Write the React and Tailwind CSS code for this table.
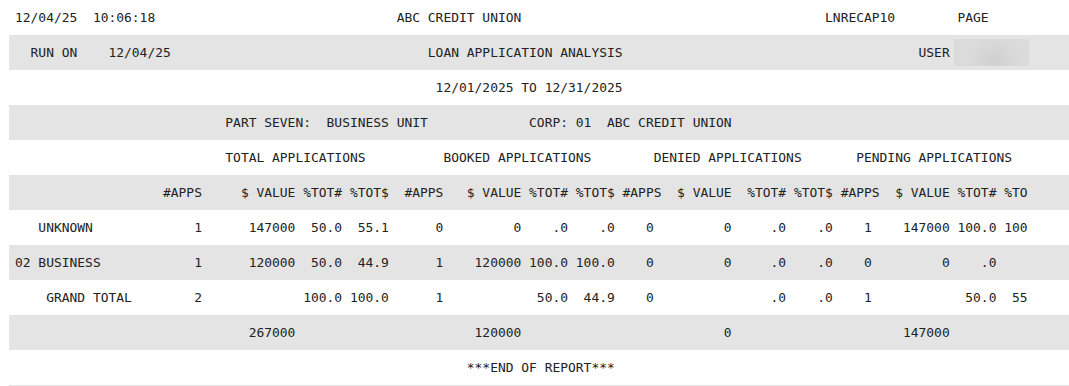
import React from 'react';

// report is a fixed 130-column printout, clipped at the right
const WIDTH = 130;

// place text at char columns; align 'r' means col is the last char
function buildLine(parts) {
  const chars = Array(WIDTH).fill(' ');
  parts.forEach(([col, text, align]) => {
    const start = align === 'r' ? col - text.length + 1 : col;
    for (let i = 0; i < text.length; i++) {
      const c = start + i;
      if (c >= 0 && c < WIDTH) chars[c] = text[i];
    }
  });
  return chars.join('').replace(/\s+$/, '');
}

// end columns for #APPS, $ VALUE, %TOT#, %TOT$ per group
const GROUPS = [
  [23, 35, 41, 47],
  [54, 64, 70, 76],
  [81, 91, 98, 104],
  [109, 119, 125, 131],
];

const HEADER_STARTS = [
  [19, 29, 37, 43],
  [50, 58, 66, 72],
  [78, 85, 94, 100],
  [106, 113, 121, 127],
];

const dataLine = (labelCol, label, groups) => {
  const parts = [[labelCol, label]];
  groups.forEach((vals, g) => {
    vals.forEach((v, i) => {
      if (v !== '') parts.push([GROUPS[g][i], v, 'r']);
    });
  });
  return buildLine(parts);
};

const headerLine = () => {
  const names = ['#APPS', '$ VALUE', '%TOT#', '%TOT$'];
  const parts = [];
  HEADER_STARTS.forEach((cols) => cols.forEach((c, i) => parts.push([c, names[i]])));
  return buildLine(parts);
};

const lines = [
  buildLine([[0, '12/04/25  10:06:18'], [49, 'ABC CREDIT UNION'], [104, 'LNRECAP10'], [121, 'PAGE']]),
  'USER_ROW',
  buildLine([[54, '12/01/2025 TO 12/31/2025']]),
  buildLine([[27, 'PART SEVEN:  BUSINESS UNIT'], [66, 'CORP: 01  ABC CREDIT UNION']]),
  buildLine([[27, 'TOTAL APPLICATIONS'], [55, 'BOOKED APPLICATIONS'], [82, 'DENIED APPLICATIONS'], [108, 'PENDING APPLICATIONS']]),
  headerLine(),
  dataLine(3, 'UNKNOWN', [
    ['1', '147000', '50.0', '55.1'],
    ['0', '0', '.0', '.0'],
    ['0', '0', '.0', '.0'],
    ['1', '147000', '100.0', '100.0'],
  ]),
  dataLine(0, '02 BUSINESS', [
    ['1', '120000', '50.0', '44.9'],
    ['1', '120000', '100.0', '100.0'],
    ['0', '0', '.0', '.0'],
    ['0', '0', '.0', '.0'],
  ]),
  dataLine(4, 'GRAND TOTAL', [
    ['2', '', '100.0', '100.0'],
    ['1', '', '50.0', '44.9'],
    ['0', '', '.0', '.0'],
    ['1', '', '50.0', '55.1'],
  ]),
  dataLine(0, '', [
    ['', '267000', '', ''],
    ['', '120000', '', ''],
    ['', '0', '', ''],
    ['', '147000', '', ''],
  ]),
  buildLine([[58, '***END OF REPORT***']]),
  '',
];

function RunOnRow() {
  const text = buildLine([[2, 'RUN ON'], [12, '12/04/25'], [53, 'LOAN APPLICATION ANALYSIS'], [116, 'USER']]);
  return (
    <>
      <span>{text}</span>
      {/* redacted user id */}
      <span className="ml-[4px] inline-block w-[75px] h-[27px] bg-[radial-gradient(circle_at_55%_85%,#d0d0d0_0,#d6d6d6_30%,#dbdbdb_60%)]" />
    </>
  );
}

export default function App() {
  return (
    <div className="w-full h-[386px] overflow-hidden bg-white font-['DejaVu_Sans_Mono',monospace] text-[12.95px] text-[#222]">
      {lines.map((line, i) => (
        <div
          key={i}
          className={`ml-[9px] pl-[6px] h-[35px] flex items-center whitespace-pre overflow-hidden ${
            i % 2 === 1 ? 'bg-[#e4e4e4]' : 'bg-white'
          }`}
        >
          {line === 'USER_ROW' ? <RunOnRow /> : line}
        </div>
      ))}
    </div>
  );
}
